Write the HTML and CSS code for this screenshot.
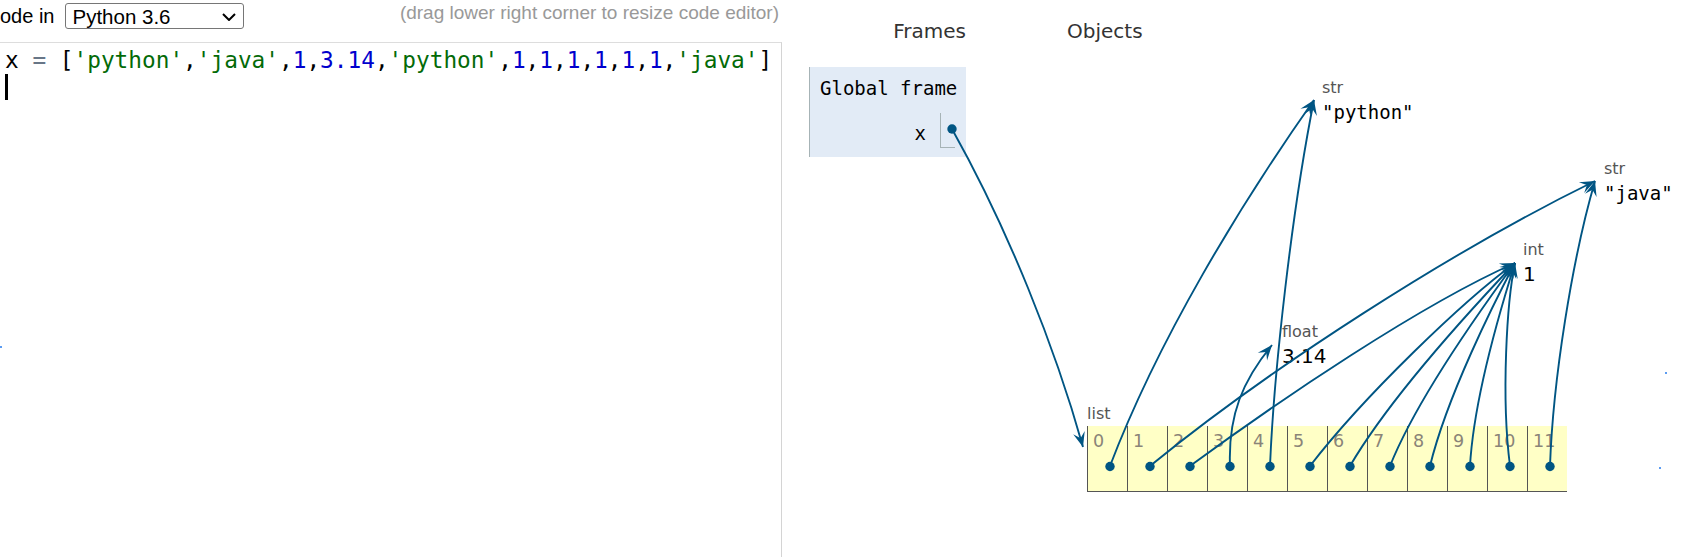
FILE: index.html
```html
<!DOCTYPE html>
<html>
<head>
<meta charset="utf-8">
<title>Python Tutor</title>
<link rel="stylesheet" href="styles.css">
</head>
<body>
<div class="page">
  <section class="editor-pane">
    <div class="editor-head">
      <div class="lang">
        <span class="lang-label">ode in</span>
        <span class="select-wrap">
          <select class="lang-select"><option>Python 3.6</option></select>
          <svg class="chev" viewBox="0 0 14 8"><path d="M1 1 L7 7 L13 1"/></svg>
        </span>
      </div>
      <span class="drag-hint">(drag lower right corner to resize code editor)</span>
    </div>
    <div class="editor">
      <div class="code-line"><span class="tk-id">x</span> <span class="tk-op">=</span> [<span class="tk-str">'python'</span>,<span class="tk-str">'java'</span>,<span class="tk-num">1</span>,<span class="tk-num">3.14</span>,<span class="tk-str">'python'</span>,<span class="tk-num">1</span>,<span class="tk-num">1</span>,<span class="tk-num">1</span>,<span class="tk-num">1</span>,<span class="tk-num">1</span>,<span class="tk-num">1</span>,<span class="tk-str">'java'</span>]</div>
      <div class="code-line"><span class="cursor"></span></div>
      <span class="stray stray-left"></span>
    </div>
  </section>

  <section class="viz">
    <div class="stack-col">
      <div class="col-head">Frames</div>
      <div class="frame">
        <div class="frame-title">Global frame</div>
        <div class="frame-row">
          <span class="var-name">x</span>
          <span class="var-ptr"></span>
        </div>
      </div>
    </div>
    <div class="heap-col">
      <div class="col-head">Objects</div>
    </div>

    <div class="heap-obj obj-python">
      <div class="type-label">str</div>
      <div class="str-val">"python"</div>
    </div>
    <div class="heap-obj obj-java">
      <div class="type-label">str</div>
      <div class="str-val">"java"</div>
    </div>
    <div class="heap-obj obj-int">
      <div class="type-label">int</div>
      <div class="num-val">1</div>
    </div>
    <div class="heap-obj obj-float">
      <div class="type-label">float</div>
      <div class="num-val">3.14</div>
    </div>
    <div class="heap-obj obj-list">
      <div class="type-label">list</div>
      <div class="list-row">
        <div class="cell">0</div><div class="cell">1</div><div class="cell">2</div><div class="cell">3</div><div class="cell">4</div><div class="cell">5</div><div class="cell">6</div><div class="cell">7</div><div class="cell">8</div><div class="cell">9</div><div class="cell">10</div><div class="cell">11</div>
      </div>
    </div>

    <svg class="arrows" viewBox="782 0 917 557" width="917" height="557">
      <defs>
        <marker id="ah" viewBox="-16 -8 17 16" refX="0" refY="0" markerWidth="17" markerHeight="16" markerUnits="userSpaceOnUse" orient="auto">
          <path d="M0,0 L-15,-6 L-9,0 L-15,6 Z" fill="#005583"/>
        </marker>
      </defs>
      <g class="links" marker-end="url(#ah)">
        <path d="M952,129 C1008,229 1055,347 1083,447"/>
        <path d="M1110,466 C1158,340 1240,205 1314,100"/>
        <path d="M1270,466 C1274,370 1292,210 1314,100"/>
        <path d="M1150,466 C1270,368 1450,252 1595,181"/>
        <path d="M1190,466 C1280,400 1420,305 1515,263"/>
        <path d="M1230,466 C1228,415 1243,380 1272,345"/>
        <path d="M1310,466 C1364,396 1463,301 1515,263"/>
        <path d="M1350,466 C1391,396 1479,301 1515,263"/>
        <path d="M1390,466 C1418,396 1487,301 1515,263"/>
        <path d="M1430,466 C1447,396 1495,301 1515,263"/>
        <path d="M1470,466 C1474,396 1503,301 1515,263"/>
        <path d="M1510,466 C1501,396 1507,301 1515,263"/>
        <path d="M1550,466 C1553,380 1572,260 1595,181"/>
      </g>
      <g class="dots">
        <circle cx="952" cy="129" r="4.7"/>
        <circle cx="1110" cy="466.5" r="4.7"/>
        <circle cx="1150" cy="466.5" r="4.7"/>
        <circle cx="1190" cy="466.5" r="4.7"/>
        <circle cx="1230" cy="466.5" r="4.7"/>
        <circle cx="1270" cy="466.5" r="4.7"/>
        <circle cx="1310" cy="466.5" r="4.7"/>
        <circle cx="1350" cy="466.5" r="4.7"/>
        <circle cx="1390" cy="466.5" r="4.7"/>
        <circle cx="1430" cy="466.5" r="4.7"/>
        <circle cx="1470" cy="466.5" r="4.7"/>
        <circle cx="1510" cy="466.5" r="4.7"/>
        <circle cx="1550" cy="466.5" r="4.7"/>
      </g>
      <g class="strays">
        <rect x="1665" y="372" width="2" height="2"/>
        <rect x="1659" y="467" width="2" height="2"/>
      </g>
    </svg>
  </section>
</div>
</body>
</html>
```
FILE: styles.css
```css
* { box-sizing: border-box; }

html, body {
  margin: 0;
  padding: 0;
  background: #ffffff;
}

body {
  width: 1699px;
  height: 557px;
  overflow: hidden;
  font-family: "DejaVu Sans", Verdana, sans-serif;
  color: #000;
}

.page {
  display: flex;
  height: 557px;
}

/* ---------- editor side ---------- */
.editor-pane {
  width: 782px;
  flex: none;
  display: flex;
  flex-direction: column;
}

.editor-head {
  height: 42px;
  display: flex;
  justify-content: space-between;
  align-items: flex-start;
  font-family: "Liberation Sans", Arial, sans-serif;
}

.lang {
  display: flex;
  align-items: center;
  padding-top: 3px;
}

.lang-label {
  font-size: 20px;
  line-height: 23px;
  margin-right: 10px;
  white-space: pre;
}

.select-wrap {
  position: relative;
  display: flex;
}

.lang-select {
  -webkit-appearance: none;
  appearance: none;
  width: 179px;
  height: 26px;
  margin: 0;
  padding: 0 0 0 7px;
  border: 1px solid #767676;
  border-radius: 3px;
  background: #ffffff;
  color: #000;
  font-family: "Liberation Sans", Arial, sans-serif;
  font-size: 20.5px;
}

.chev {
  position: absolute;
  right: 8px;
  top: 10px;
  width: 14px;
  height: 8px;
  pointer-events: none;
}

.chev path {
  fill: none;
  stroke: #000;
  stroke-width: 2;
}

.drag-hint {
  font-size: 19px;
  line-height: 22px;
  padding-top: 2px;
  padding-right: 3px;
  color: #999999;
  white-space: pre;
}

.editor {
  flex: 1;
  position: relative;
  border-top: 1px solid #dddddd;
  border-right: 1px solid #d4d4d4;
  padding: 4px 0 0 5px;
  font-family: "DejaVu Sans Mono", "Liberation Mono", monospace;
  font-size: 22.75px;
  line-height: 27px;
  color: #000;
}

.code-line {
  height: 27px;
  white-space: pre;
}

.tk-op { color: #687687; }
.tk-str { color: #036a07; }
.tk-num { color: #0000cd; }

.cursor {
  display: inline-block;
  width: 3px;
  height: 26px;
  background: #000;
  vertical-align: top;
}

.stray {
  position: absolute;
  width: 2px;
  height: 2px;
  background: #5b9cf2;
}

.stray-left {
  left: 0;
  top: 303px;
}

/* ---------- visualizer side ---------- */
.viz {
  flex: 1;
  position: relative;
  display: flex;
  align-items: flex-start;
}

.col-head {
  margin-top: 19px;
  font-size: 20px;
  line-height: 24px;
  color: #333333;
}

.stack-col {
  width: 157px;
  margin-left: 27px;
}

.stack-col .col-head {
  text-align: right;
}

.heap-col {
  margin-left: 101px;
}

.frame {
  margin-top: 24px;
  height: 90px;
  padding: 9px 11px 9px 10px;
  background: #e2ebf6;
  border-left: 1px solid #a6b3b6;
}

.frame-title {
  font-family: "DejaVu Sans Mono", monospace;
  font-size: 19px;
  line-height: 24px;
  white-space: pre;
}

.frame-row {
  margin-top: 13px;
  display: flex;
  justify-content: flex-end;
  align-items: flex-end;
}

.var-name {
  font-family: "DejaVu Sans Mono", monospace;
  font-size: 19px;
  line-height: 24px;
  margin-right: 14px;
  margin-bottom: 3px;
}

.var-ptr {
  width: 15px;
  height: 35px;
  border-left: 1px solid #a6b3b6;
  border-bottom: 1px solid #a6b3b6;
}

.heap-obj {
  position: absolute;
}

.type-label {
  font-size: 16px;
  line-height: 20px;
  color: #555555;
}

.str-val {
  font-family: "DejaVu Sans Mono", monospace;
  font-size: 19px;
  line-height: 28px;
  white-space: pre;
}

.num-val {
  font-size: 20px;
  line-height: 28px;
}

.obj-python { left: 540px; top: 78px; }
.obj-java   { left: 822px; top: 159px; }
.obj-int    { left: 741px; top: 240px; }
.obj-float  { left: 500px; top: 322px; }
.obj-list   { left: 305px; top: 404px; }

.list-row {
  display: flex;
  margin-top: 2px;
}

.cell {
  width: 40px;
  height: 66px;
  padding: 5px 0 0 5px;
  background: #ffffc6;
  border-left: 1px solid #555555;
  border-bottom: 1px solid #555555;
  font-size: 17.5px;
  line-height: 20px;
  color: #8a8478;
}

.arrows {
  position: absolute;
  left: 0;
  top: 0;
  overflow: visible;
  pointer-events: none;
}

.links path {
  fill: none;
  stroke: #005583;
  stroke-width: 1.9;
}

.dots circle {
  fill: #005583;
}

.strays rect {
  fill: #5b9cf2;
}
```
